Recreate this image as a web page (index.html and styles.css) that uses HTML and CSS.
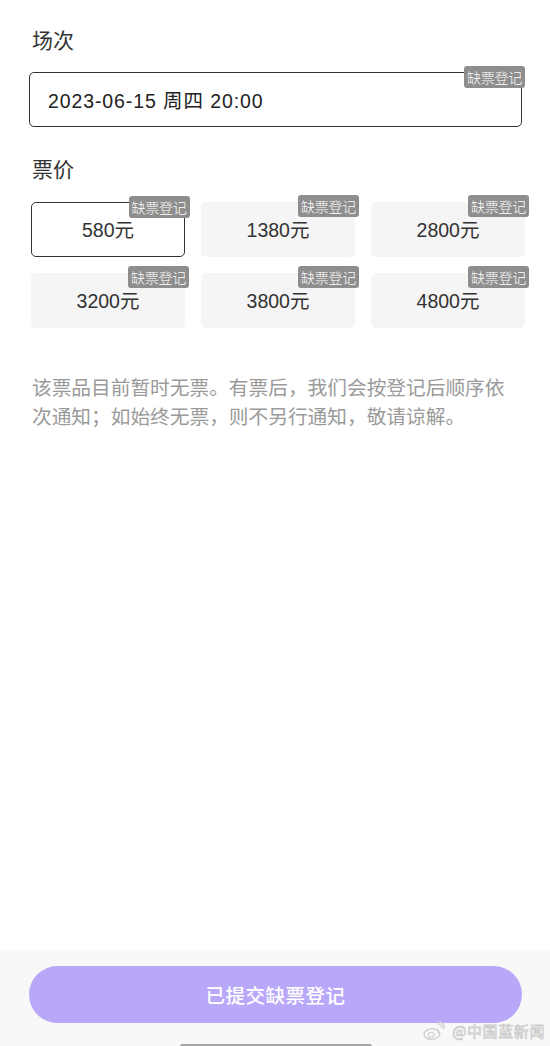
FILE: index.html
```html
<!DOCTYPE html>
<html lang="zh-CN">
<head>
<meta charset="utf-8">
<title>缺票登记</title>
<link rel="stylesheet" href="styles.css">
</head>
<body>
<div class="page">
  <main class="content">
    <h2 class="label label-session">场次</h2>
    <div class="session">
      <span class="session-text">2023-06-15 周四 20:00</span>
      <span class="badge">缺票登记</span>
    </div>

    <h2 class="label label-price">票价</h2>
    <div class="prices">
      <div class="price selected"><span>580元</span><span class="badge">缺票登记</span></div>
      <div class="price"><span>1380元</span><span class="badge">缺票登记</span></div>
      <div class="price"><span>2800元</span><span class="badge">缺票登记</span></div>
      <div class="price"><span>3200元</span><span class="badge">缺票登记</span></div>
      <div class="price"><span>3800元</span><span class="badge">缺票登记</span></div>
      <div class="price"><span>4800元</span><span class="badge">缺票登记</span></div>
    </div>

    <p class="notice">该票品目前暂时无票。有票后，我们会按登记后顺序依次通知；如始终无票，则不另行通知，敬请谅解。</p>
  </main>

  <footer class="footer">
    <button class="submit">已提交缺票登记</button>
    <div class="watermark">
      <svg class="weibo" width="26" height="20" viewBox="0 0 20 17">
        <path d="M8 6.5c-3.6 0.3-6.5 2.5-6.5 5s3 4.3 6.8 4.1c3.8-0.3 6.8-2.4 6.7-4.8-0.1-1-1-1.5-1.8-1.6 0.5-1 0.3-2-1-2.1-1 0-2 0.4-2.2 0.6 0.4-0.9 0.1-1.4-1-1.2z" fill="none" stroke="#cfcfcf" stroke-width="1.2"/>
        <ellipse cx="7.6" cy="11.8" rx="2.6" ry="2" fill="none" stroke="#cfcfcf" stroke-width="1"/>
        <path d="M13.5 2.5c2 0 3.5 1.5 3.3 3.5M13.6 0.8c3.2 0 5.6 2.5 5.1 5.7" fill="none" stroke="#cfcfcf" stroke-width="1.1" stroke-linecap="round"/>
      </svg>
      <span class="wm-text">@中国蓝新闻</span>
    </div>
    <div class="home-bar"></div>
  </footer>
</div>
</body>
</html>
```

FILE: styles.css
```css
* {
  box-sizing: border-box;
}

html, body {
  margin: 0;
  padding: 0;
  background: #ffffff;
}

body {
  font-family: "Liberation Sans", "Noto Sans CJK SC", sans-serif;
  color: #333333;
}

.page {
  width: 550px;
  height: 1046px;
  display: flex;
  flex-direction: column;
  overflow: hidden;
  position: relative;
}

.content {
  flex: 1;
  padding: 25px 0 0 0;
}

.label {
  margin: 0;
  padding-left: 32px;
  font-family: "Noto Sans CJK SC", sans-serif;
  font-size: 21px;
  line-height: 28px;
  font-weight: 400;
  color: #333333;
}

.session {
  position: relative;
  margin: 19px 0 0 29px;
  width: 493px;
  height: 55px;
  border: 1.5px solid #333333;
  border-radius: 5px;
  display: flex;
  align-items: center;
  padding-left: 18px;
}

.session-text {
  font-size: 19.5px;
  color: #222222;
  letter-spacing: 0.9px;
}

.badge {
  position: absolute;
  top: -7px;
  right: -4px;
  width: 61px;
  height: 22px;
  background: #8e8e8e;
  color: #ffffff;
  font-family: "Noto Sans CJK SC", sans-serif;
  font-size: 14px;
  line-height: 22px;
  text-align: center;
  border-radius: 3px;
  white-space: nowrap;
  letter-spacing: -0.3px;
  font-weight: 300;
}

.label-price {
  margin-top: 27px;
}

.prices {
  margin: 20px 0 0 31px;
  display: grid;
  grid-template-columns: repeat(3, 154px);
  grid-auto-rows: 55px;
  column-gap: 16px;
  row-gap: 16px;
}

.price {
  position: relative;
  background: #f5f5f5;
  border-radius: 5px;
  display: flex;
  align-items: center;
  justify-content: center;
  font-size: 19.5px;
  color: #333333;
  padding-bottom: 3px;
}

.price.selected {
  background: #ffffff;
  border: 1.5px solid #333333;
}

.price.selected .badge {
  top: -7.5px;
  right: -5.5px;
}

.notice {
  margin: 44px 0 0 32px;
  width: 480px;
  font-family: "Noto Sans CJK SC", sans-serif;
  font-size: 19.7px;
  line-height: 29px;
  color: #9a9a9a;
}

.footer {
  height: 96px;
  background: #f8f8f8;
  position: relative;
  padding: 16px 0 0 29px;
}

.submit {
  display: block;
  width: 493px;
  height: 57px;
  border: none;
  border-radius: 29px;
  background: #b9a8fa;
  color: #ffffff;
  font-family: "Noto Sans CJK SC", sans-serif;
  font-size: 19.5px;
  font-weight: 500;
  letter-spacing: 0.5px;
  padding: 0;
}

.watermark {
  position: absolute;
  right: 5px;
  bottom: 5px;
  display: flex;
  align-items: center;
  gap: 5px;
}

.wm-text {
  font-family: "Noto Sans CJK SC", sans-serif;
  font-size: 15px;
  color: #f6f6f6;
  -webkit-text-stroke: 0.8px #cdcdcd;
  letter-spacing: 0.6px;
}

.home-bar {
  position: absolute;
  left: 180px;
  bottom: -3px;
  width: 192px;
  height: 5px;
  border-radius: 3px;
  background: #a6a6a6;
}
```
